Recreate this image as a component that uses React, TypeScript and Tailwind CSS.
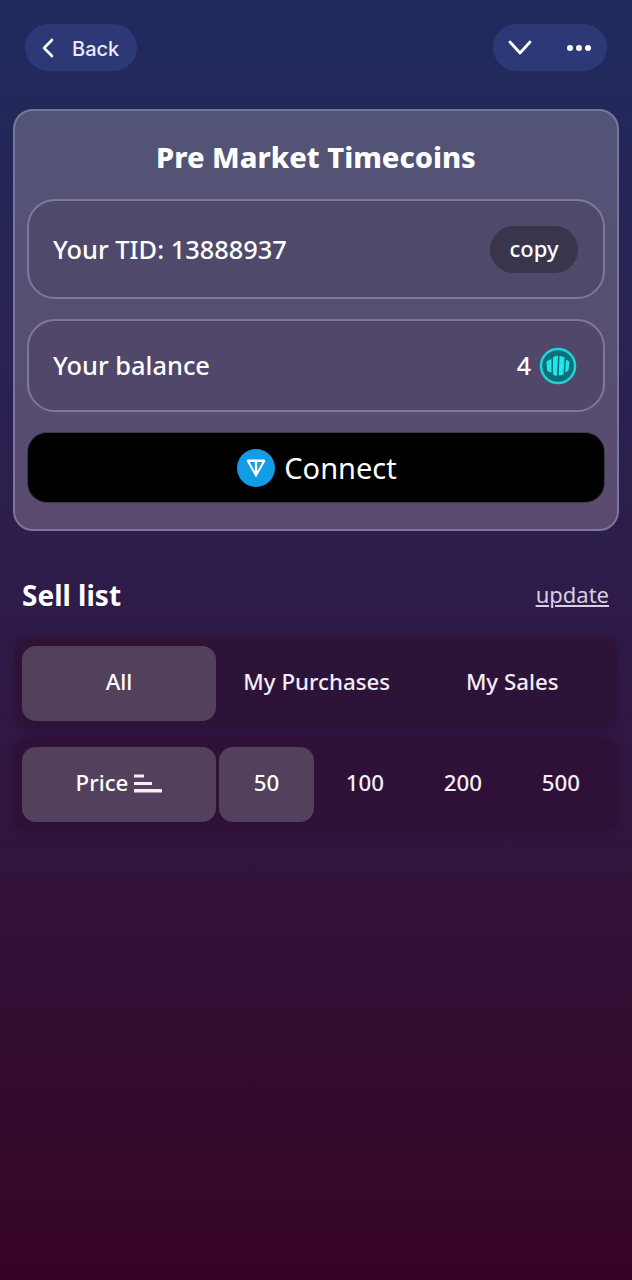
const font = "font-['Noto_Sans',sans-serif]";

function BalanceCoin() {
  return (
    <svg width="38" height="38" viewBox="0 0 38 38">
      <circle cx="19" cy="19" r="17" fill="#0f6f78" stroke="#1fd3d8" strokeWidth="2.5" />
      <path d="M7.5 14.5 Q10 12.5 12.5 12 L12.5 25.5 Q10 25.5 8 23.5 Z" fill="#1fe6ec" />
      <path d="M14 10.5 Q16.5 8.5 19 8.5 L18 28.5 Q16 29 14 27.5 Z" fill="#1fe6ec" />
      <path d="M20.5 9 Q23.5 9 25.5 10.5 L24.5 27.5 Q22.5 28.5 19.8 28.5 Z" fill="#1fe6ec" />
      <path d="M27 12.5 Q29.5 13.5 30.5 15 L29.5 23 Q28 25 26.2 25.5 Z" fill="#1fe6ec" />
    </svg>
  );
}

function TonIcon() {
  return (
    <svg width="38" height="38" viewBox="0 0 38 38">
      <circle cx="19" cy="19" r="19" fill="#129ce6" />
      <path
        d="M11.5 10.5 H26.5 Q29 10.5 27.8 13 L19 28.5 L10.2 13 Q9 10.5 11.5 10.5 Z M17.8 13 H12.8 L17.8 22.4 Z M20.2 13 V22.4 L25.2 13 Z"
        fill="#fff"
        fillRule="evenodd"
      />
    </svg>
  );
}

function SortIcon() {
  return (
    <svg width="29" height="19" viewBox="0 0 29 19" fill="#f5eef5">
      <rect x="1" y="0.5" width="10" height="3" />
      <rect x="1" y="8" width="18" height="3" />
      <rect x="1" y="15" width="28" height="3.5" />
    </svg>
  );
}

export default function App() {
  const tabs = ["My Purchases", "My Sales"];
  const prices = ["100", "200", "500"];

  return (
    <div className={`${font} w-[632px] h-[1280px] bg-gradient-to-b from-[#202b5e] via-[#2e1a48] to-[#360325] text-white overflow-hidden`}>
      {/* top bar */}
      <div className="flex items-center justify-between pt-6 pl-[25px] pr-[25px]">
        <div className="flex items-center w-[112px] h-[47px] rounded-full bg-[#2d3877] pl-[16px] gap-[17px] font-['Inter',sans-serif] text-[20px] font-medium text-[#e8eaf6]">
          <svg width="14" height="20" viewBox="0 0 14 20" fill="none" stroke="#fff" strokeWidth="2.6" strokeLinecap="round" strokeLinejoin="round">
            <path d="M11 2 L3 10 L11 18" />
          </svg>
          <span className="pt-[3px]">Back</span>
        </div>
        <div className="flex items-center w-[114px] h-[47px] rounded-full bg-[#2d3877] pl-[15px] gap-[34px]">
          <svg width="24" height="15" viewBox="0 0 24 15" fill="none" stroke="#fff" strokeWidth="2.8" strokeLinecap="round" strokeLinejoin="round">
            <path d="M2 2 L12 13 L22 2" />
          </svg>
          <svg width="26" height="8" viewBox="0 0 26 8" fill="#fff">
            <circle cx="4" cy="4" r="3" />
            <circle cx="13" cy="4" r="3" />
            <circle cx="22" cy="4" r="3" />
          </svg>
        </div>
      </div>

      {/* card */}
      <div className="mx-[13px] mt-[38px] h-[422px] rounded-[20px] border-2 border-[#77769c] bg-gradient-to-b from-[#525477] to-[#5a4a6e] px-[12px]">
        <h1 className="text-center text-[29px] font-extrabold leading-[38px] mt-[27px]">Pre Market Timecoins</h1>
        <div className="mt-[23px] h-[100px] flex items-center justify-between rounded-[28px] border-2 border-[#7c7a9c] bg-[#4f4a6b] pl-[24px] pr-[25px]">
          <span className="text-[25.4px] font-medium">Your TID: 13888937</span>
          <span className="flex items-center justify-center w-[88px] h-[47px] rounded-full bg-[#39354d] text-[22px] font-medium pb-[2px]">copy</span>
        </div>
        <div className="mt-[20px] h-[93px] flex items-center justify-between rounded-[28px] border-2 border-[#7c7a9c] bg-[#50476a] pl-[24px] pr-[26px]">
          <span className="text-[25.4px] font-medium">Your balance</span>
          <span className="flex items-center gap-[8px] text-[25px] font-medium">
            4 <BalanceCoin />
          </span>
        </div>
        <div className="mt-[20px] h-[71px] flex items-center justify-center gap-[9px] rounded-[20px] bg-black border border-[#3d3a4c] text-[29px] pl-[2px]">
          <TonIcon />
          <span>Connect</span>
        </div>
      </div>

      {/* sell list */}
      <div className="flex items-center justify-between mt-[44px] pl-[22px] pr-[23px]">
        <span className="text-[28px] font-bold leading-[40px]">Sell list</span>
        <span className="text-[22px] underline text-[#d8cfe0] leading-[38px] pb-[2px]">update</span>
      </div>

      <div className="mx-[14px] mt-[22px] h-[92px] rounded-[16px] bg-[#2e1339] shadow-[0_0_6px_#2e1339] flex items-center px-[8px] text-[22.3px] font-medium">
        <div className="w-[194px] h-[75px] rounded-[14px] bg-[#52405d] flex items-center justify-center pb-[2px]">All</div>
        <div className="flex-1 flex pb-[2px] pl-[3px]">
          {tabs.map((t) => (
            <div key={t} className="flex-1 text-center text-[#f3edf5]">{t}</div>
          ))}
        </div>
      </div>

      <div className="mx-[14px] mt-[9px] h-[92px] rounded-[16px] bg-[#2f1036] shadow-[0_0_6px_#2f1036] flex items-center px-[8px] text-[22.3px] font-medium">
        <div className="w-[194px] h-[75px] rounded-[14px] bg-[#52405c] flex items-center justify-center gap-[5px] pb-[2px]">
          Price <SortIcon />
        </div>
        <div className="ml-[3px] w-[95px] h-[75px] rounded-[14px] bg-[#52405c] flex items-center justify-center pb-[2px]">50</div>
        <div className="flex-1 flex pb-[2px] pl-[2px]">
          {prices.map((p) => (
            <div key={p} className="flex-1 text-center text-[#f3edf5]">{p}</div>
          ))}
        </div>
      </div>
    </div>
  );
}
